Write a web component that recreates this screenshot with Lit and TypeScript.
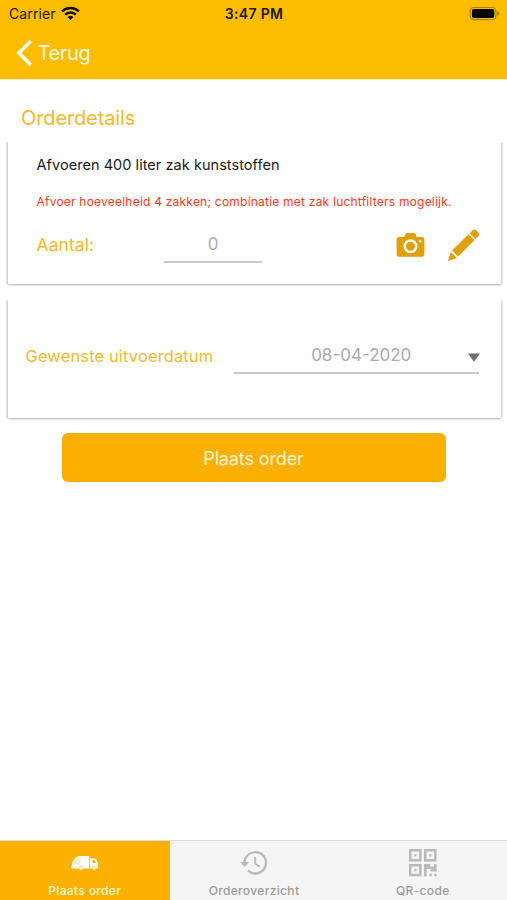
import { LitElement, html, css, svg } from "lit";
import { customElement, property } from "lit/decorators.js";
import { classMap } from "lit/directives/class-map.js";

const truckIcon = svg`
  <svg width="28" height="16" viewBox="0 0 28 16">
    <path d="M6.500 1.600Q7.200 1 8.200 1H18.400v12.400H1.200Q.4 13.400.5 12.200L1 8.200Q2 4.600 6.500 1.600z" fill="#fff"/>
    <path d="M19.200 3.400h4.400q.9 0 1.400.9l1.800 3.200q.3.5.3 1.200v4.700h-7.900z" fill="#fff"/>
    <path d="M3 9.600L8.600 2.800M6.300 10.400L9.600 4.600" stroke="#fcb100" stroke-width=".6" fill="none"/>
    <path d="M21.800 5h1.700l1.500 2.900h-3.200z" fill="#fcb100"/>
    <circle cx="10" cy="13.200" r="2" fill="#fff" stroke="#fcb100" stroke-width=".6"/>
    <circle cx="23.300" cy="13.200" r="2" fill="#fff" stroke="#fcb100" stroke-width=".6"/>
  </svg>`;

const historyIcon = svg`
  <svg width="28" height="26" viewBox="0 0 28 26" fill="none" stroke="#bababa" stroke-width="2.300">
    <path d="M4.600 13A10.700 10.700 0 1 1 8 20.600"/>
    <path d="M.2 12h9L4.700 17z" fill="#bababa" stroke="none"/>
    <path d="M15.200 7v6.400l4.600 3.400" stroke-width="1.900"/>
  </svg>`;

const qrIcon = svg`
  <svg width="28" height="28" viewBox="0 0 28 28" fill="#bababa">
    <path fill-rule="evenodd" d="M0 0h12.600v12.600H0zM2.500 2.500v7.600h7.600V2.500zM15 0h12.600v12.600H15zM17.500 2.500v7.600h7.600V2.500zM0 15h12.600v12.200H0zM2.500 17.500v7.200h7.600v-7.200z"/>
    <path d="M5.200 5.200h2.300v2.300H5.200zM20.200 5.200h2.300v2.300h-2.300zM5.200 20h2.300v2.300H5.200z"/>
    <path d="M15 15h6.200v2.400h3.800V15h2.600v7.400h-6v-2.500h-3.900v7.300H15zM20.400 24.800h2.400v2.400h-2.400zM25.200 24.800h2.400v2.400h-2.400z"/>
  </svg>`;

@customElement("status-bar")
class StatusBar extends LitElement {
  static styles = css`
    :host { display: grid; grid-template-columns: 1fr auto 1fr; align-items: center; height: 27px; padding: 0 7px 0 9px; color: #1c1600; font-size: 14px; line-height: 17px; }
    .left { display: flex; align-items: center; gap: 5px; }
    .carrier { letter-spacing: 0.1px; }
    .time { font-weight: 600; letter-spacing: 0.35px; margin-right: 1px; }
    .battery { justify-self: end; }
    svg { display: block; }
  `;
  render() {
    return html`
      <div class="left">
        <span class="carrier">Carrier</span>
        <svg width="19" height="14" viewBox="0 0 19 14" fill="none" stroke="#0d0a00" stroke-width="2.500">
          <path d="M1.100 4.400a12 12 0 0 1 16.800 0"/>
          <path d="M4.200 7.700a7.500 7.500 0 0 1 10.600 0"/>
          <path d="M9.500 13.100L6.600 10.100a4.200 4.200 0 0 1 5.800 0z" fill="#0d0a00" stroke="none"/>
        </svg>
      </div>
      <span class="time">3:47 PM</span>
      <svg class="battery" width="31" height="14" viewBox="0 0 31 14">
        <rect x="1.200" y=".4" width="25.800" height="12.200" rx="3.600" fill="none" stroke="#a67d00" stroke-width="1"/>
        <rect x="2.900" y="2.100" width="22.400" height="8.800" rx="2" fill="#000"/>
        <path d="M28.300 4.300q2 .7 2 2.200t-2 2.200z" fill="#a67d00"/>
      </svg>`;
  }
}

@customElement("order-tab")
class OrderTab extends LitElement {
  @property() label = "";
  @property({ attribute: false }) icon: unknown;
  @property({ type: Boolean }) active = false;
  static styles = css`
    :host { display: block; }
    .tab { display: flex; flex-direction: column; align-items: center; height: 59px; color: #9b9b9b; background: #f5f5f5; }
    .active { color: #fff6dc; background: #fcb100; }
    .icon { display: flex; align-items: center; height: 28px; margin-top: 8px; }
    .label { margin-top: 6px; font-size: 12px; line-height: 15px; font-weight: 500; letter-spacing: 0.35px; white-space: nowrap; }
    svg { display: block; }
  `;
  render() {
    return html`<div class=${classMap({ tab: true, active: this.active })}>
      <div class="icon">${this.icon}</div>
      <span class="label">${this.label}</span>
    </div>`;
  }
}

@customElement("app-root")
class AppRoot extends LitElement {
  static styles = css`
    :host { display: flex; flex-direction: column; height: 900px; background: #fff; font-family: Inter, "Liberation Sans", sans-serif; white-space: nowrap; overflow: hidden; }
    svg { display: block; flex: none; }
    .header { height: 79px; background: #fcbc00; border-bottom: 1px solid #fdf0c4; box-sizing: content-box; }
    .nav { display: flex; align-items: center; gap: 4.5px; height: 52px; padding-left: 16px; color: #fff8e0; }
    .back { font-size: 20px; line-height: 24px; letter-spacing: -0.35px; }
    .title { margin: 26px 0 0 21px; font-size: 20px; line-height: 24px; font-weight: 400; letter-spacing: -0.12px; color: #f2b92b; }
    .card { margin: 0 6px 0 8px; box-sizing: border-box; background: #fff; box-shadow: -2px 0 1px rgba(0, 0, 0, 0.09), 2px 0 1px rgba(0, 0, 0, 0.07), 0 1px 2px rgba(0, 0, 0, 0.3); clip-path: inset(0 -6px -6px -6px); }
    .order { margin-top: 12px; height: 142px; padding: 13px 21px 0 28.5px; }
    .name { font-size: 14.500px; line-height: 20px; letter-spacing: 0.05px; color: #1b1b1b; }
    .note { margin-top: 18px; font-size: 12px; line-height: 18px; letter-spacing: 0.220px; color: #f83a20; }
    .row { display: flex; align-items: center; }
    .amount { margin-top: 14px; height: 40px; }
    .label { color: #f2b92b; }
    .amount .label { width: 127.5px; font-size: 17.500px; line-height: 22px; letter-spacing: 0.08px; }
    .field { box-sizing: border-box; border-bottom: 2px solid #c9c9c9; color: #ababab; text-align: center; font-size: 17px; }
    .count { width: 98px; height: 35px; line-height: 32px; }
    .actions { display: flex; align-items: center; gap: 22px; margin-left: auto; }
    .date { margin-top: 16px; height: 118px; padding: 0 22px 0 17.5px; display: flex; align-items: center; }
    .date .label { font-size: 16.500px; line-height: 22px; letter-spacing: 0.12px; margin-top: -7px; width: 208px; }
    .picker { flex: 1; height: 36px; display: grid; grid-template-columns: 1fr auto; align-items: center; margin-top: -6px; }
    .picker svg { margin: 4px -1px 0 0; }
    .value { padding-left: 21px; }
    .submit { margin: 15px 61px 0 62px; height: 49px; border: 0; border-radius: 6px; background: #fbb000; color: #fff5d8; font: 400 18px/22px Inter, "Liberation Sans", sans-serif; letter-spacing: -0.12px; flex: none; padding: 2px 1px 0 0; }
    .tabs { display: grid; grid-template-columns: 169.500px 169px 1fr; margin-top: auto; border-top: 1px solid #dcdcdc; background: #f5f5f5; }
  `;
  render() {
    return html`
      <header class="header">
        <status-bar></status-bar>
        <div class="nav">
          <svg width="17" height="28" viewBox="0 0 17 28" fill="none" stroke="#fffaf0" stroke-width="3.600">
            <path d="M14.800 2L3 14l11.800 12"/>
          </svg>
          <span class="back">Terug</span>
        </div>
      </header>
      <h1 class="title">Orderdetails</h1>
      <section class="card order">
        <div class="name">Afvoeren 400 liter zak kunststoffen</div>
        <div class="note">Afvoer hoeveelheid 4 zakken; combinatie met zak luchtfilters mogelijk.</div>
        <div class="row amount">
          <span class="label">Aantal:</span>
          <div class="field count">0</div>
          <div class="actions">
            <svg width="29" height="24" viewBox="0 0 29 24">
              <path fill="#dfa009" fill-rule="evenodd" d="M3 4h5.200l1.200-2.900Q9.800 0 11 0h7q1.200 0 1.600 1.100L20.800 4H26q2.400 0 2.400 2.400v15Q28.400 23.800 26 23.800H3Q.6 23.800.6 21.400v-15Q.6 4 3 4zM14.500 6.200a7 7 0 1 0 0 14 7 7 0 0 0 0-14zM14.500 8.700a4.500 4.500 0 1 1 0 9 4.500 4.500 0 0 1 0-9zM24.200 6.900a1.300 1.300 0 1 0 0 2.600 1.300 1.300 0 0 0 0-2.600z"/>
            </svg>
            <svg width="33" height="33" viewBox="0 0 33 33" fill="#dfa009">
              <path d="M22.600 4.200l2.800-2.800q2-2 4 0l1.800 1.800q2 2 0 4l-2.800 2.800z"/>
              <path d="M21.500 5.300l5.900 5.900L11 27.600 5 21.600z"/>
              <path d="M3.900 22.900l6.200 6.200L.8 32z"/>
            </svg>
          </div>
        </div>
      </section>
      <section class="card date">
        <span class="label">Gewenste uitvoerdatum</span>
        <div class="field picker">
          <span class="value">08-04-2020</span>
          <svg width="12" height="9" viewBox="0 0 12 9"><path d="M0 .5h12L6 8.800z" fill="#6f6f6f"/></svg>
        </div>
      </section>
      <button class="submit">Plaats order</button>
      <nav class="tabs">
        <order-tab label="Plaats order" .icon=${truckIcon} active></order-tab>
        <order-tab label="Orderoverzicht" .icon=${historyIcon}></order-tab>
        <order-tab label="QR-code" .icon=${qrIcon}></order-tab>
      </nav>`;
  }
}
